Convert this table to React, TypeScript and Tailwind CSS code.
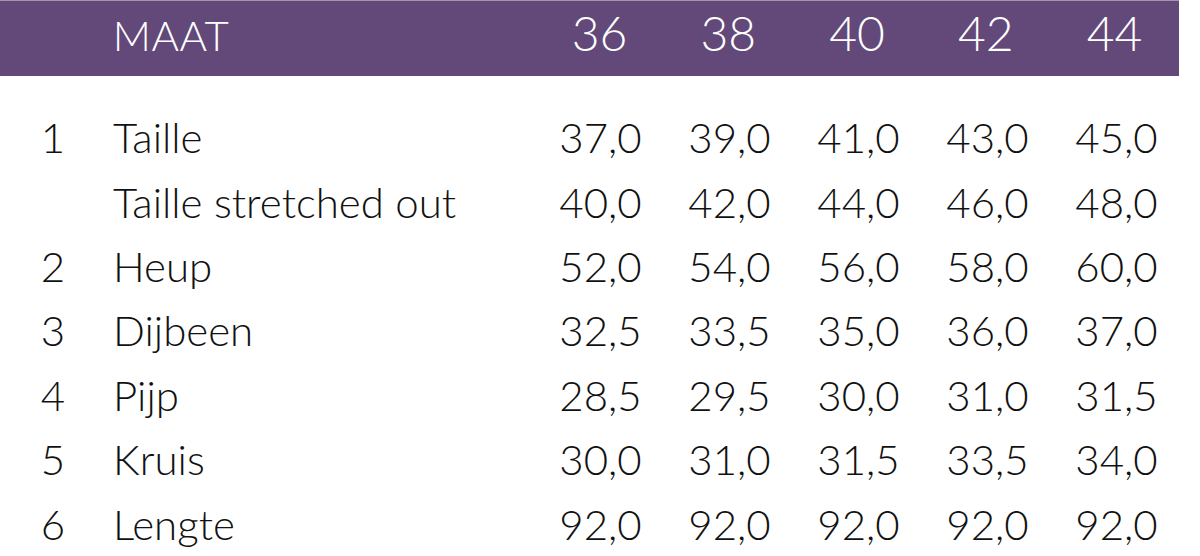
import React from "react";

const sizes = ["36", "38", "40", "42", "44"];
const rows: { n: string; label: string; vals: string[] }[] = [
  { n: "1", label: "Taille", vals: ["37,0", "39,0", "41,0", "43,0", "45,0"] },
  { n: "", label: "Taille stretched out", vals: ["40,0", "42,0", "44,0", "46,0", "48,0"] },
  { n: "2", label: "Heup", vals: ["52,0", "54,0", "56,0", "58,0", "60,0"] },
  { n: "3", label: "Dijbeen", vals: ["32,5", "33,5", "35,0", "36,0", "37,0"] },
  { n: "4", label: "Pijp", vals: ["28,5", "29,5", "30,0", "31,0", "31,5"] },
  { n: "5", label: "Kruis", vals: ["30,0", "31,0", "31,5", "33,5", "34,0"] },
  { n: "6", label: "Lengte", vals: ["92,0", "92,0", "92,0", "92,0", "92,0"] },
];

export default function App() {
  return (
    <div
      className="w-[1200px] h-[556px] bg-white overflow-hidden text-[42px] leading-none text-[#111]"
      style={{ fontFamily: "Lato, 'Open Sans', sans-serif" }}
    >
      <div className="w-[1179px] h-[76px] bg-[#624979] border-t border-[#a396b0] flex items-baseline pt-[8px] text-white font-light">
        <div className="w-[106px]" />
        <div className="w-[430px] pl-[7px] tracking-[0.5px]">MAAT</div>
        {sizes.map((s) => (
          <div key={s} className="w-[129px] text-center text-[48px]">
            {s}
          </div>
        ))}
      </div>
      <div className="pt-[29px] flex flex-col font-light">
        {rows.map((r, i) => (
          <div key={i} className="h-[64.4px] flex items-center">
            <div className="w-[106px] text-center">{r.n}</div>
            <div className="w-[430px] pl-[7px]">{r.label}</div>
            {r.vals.map((v, j) => (
              <div key={j} className="w-[129px] text-center">
                {v}
              </div>
            ))}
          </div>
        ))}
      </div>
    </div>
  );
}
